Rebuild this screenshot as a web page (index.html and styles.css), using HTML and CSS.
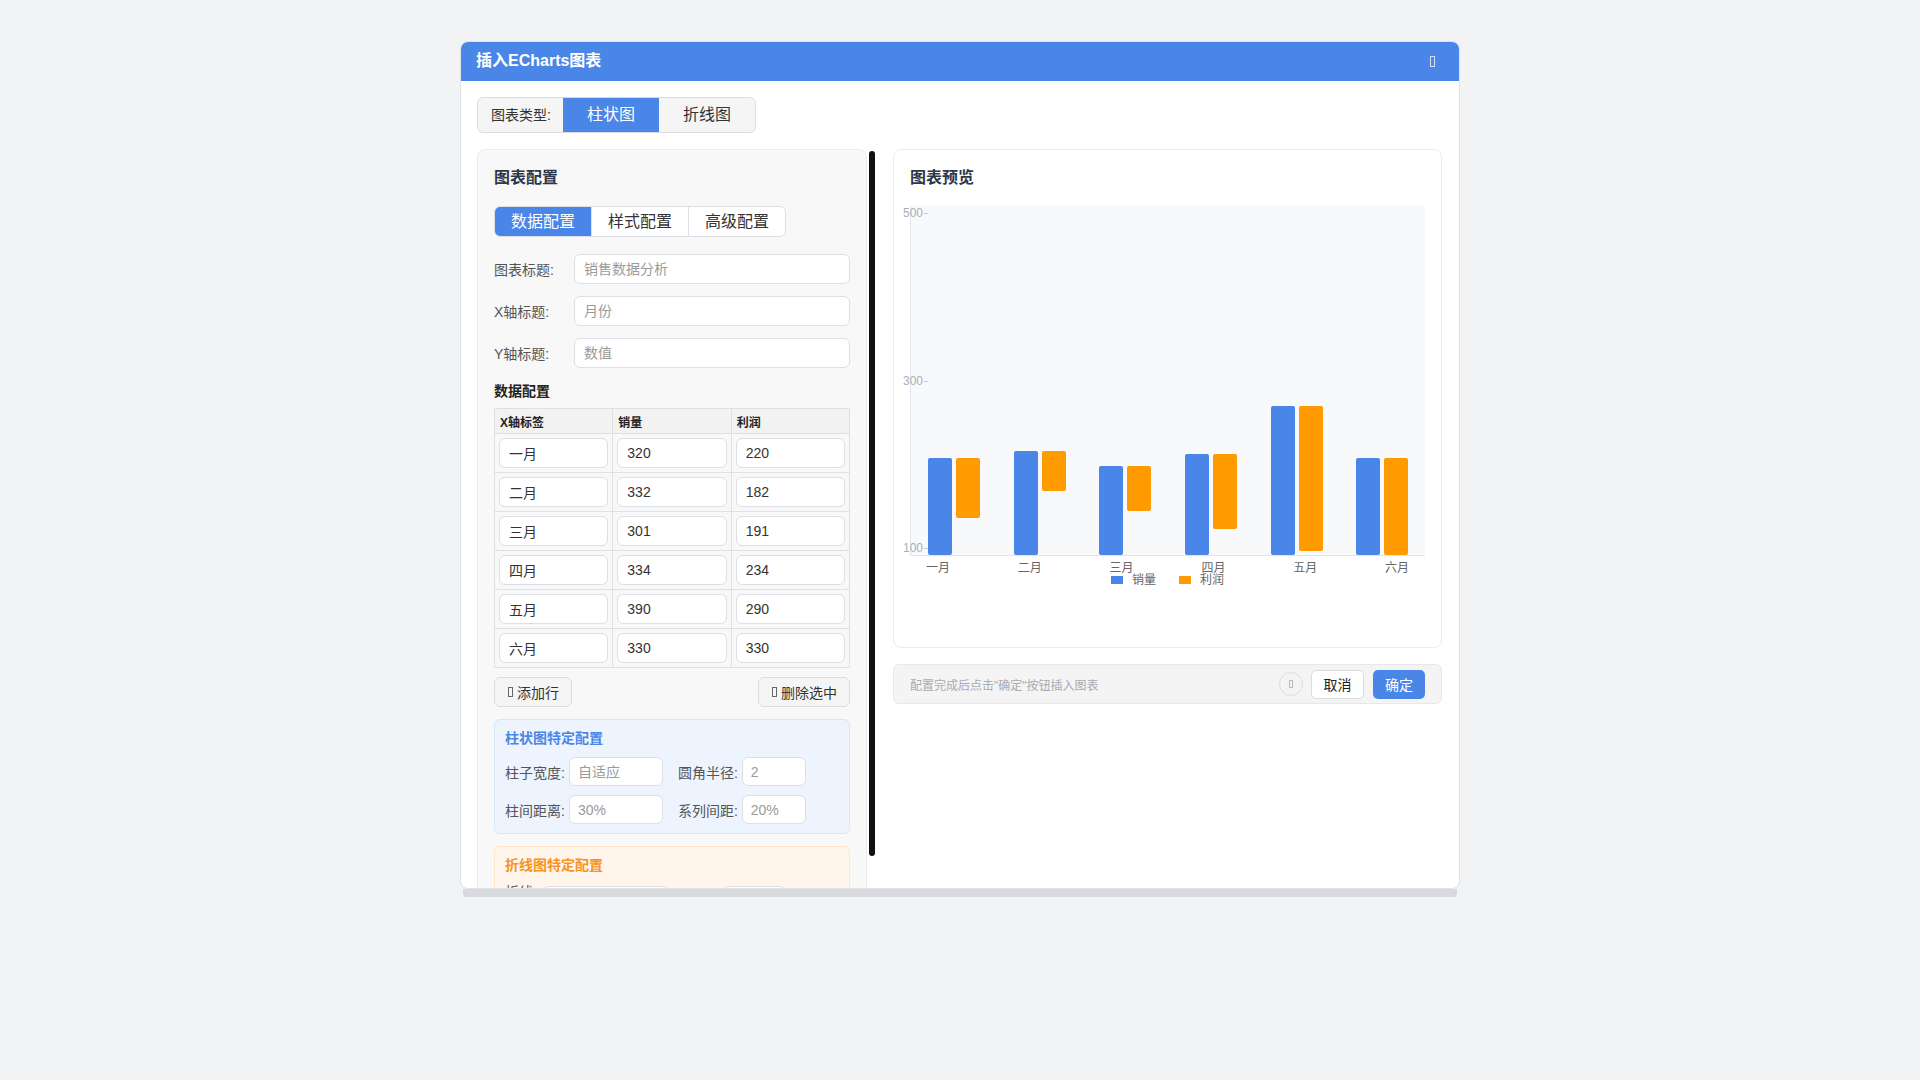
FILE: index.html
```html
<!DOCTYPE html>
<html lang="zh-CN">
<head>
<meta charset="utf-8">
<title>插入ECharts图表</title>
<link rel="stylesheet" href="styles.css">
</head>
<body>
<div class="dialog-wrap">
  <div class="dialog">
    <div class="dlg-header">
      <span class="dlg-title">插入ECharts图表</span>
      <span class="tofu tofu-light"></span>
    </div>
    <div class="dlg-body">
      <div class="type-group">
        <span class="type-label">图表类型:</span>
        <span class="type-btn active">柱状图</span>
        <span class="type-btn">折线图</span>
      </div>
      <div class="main">
        <div class="left-col">
          <div class="config-panel">
            <div class="panel-title">图表配置</div>
            <div class="tabs">
              <span class="tab active">数据配置</span>
              <span class="tab">样式配置</span>
              <span class="tab">高级配置</span>
            </div>
            <div class="form-row"><label class="form-label">图表标题:</label><input class="text-input" placeholder="销售数据分析"></div>
            <div class="form-row"><label class="form-label">X轴标题:</label><input class="text-input" placeholder="月份"></div>
            <div class="form-row"><label class="form-label">Y轴标题:</label><input class="text-input" placeholder="数值"></div>
            <div class="sub-title">数据配置</div>
            <table class="data-table">
              <thead><tr><th>X轴标签</th><th>销量</th><th>利润</th></tr></thead>
              <tbody>
                <tr><td><input class="cell-input" value="一月"></td><td><input class="cell-input" value="320"></td><td><input class="cell-input" value="220"></td></tr>
                <tr><td><input class="cell-input" value="二月"></td><td><input class="cell-input" value="332"></td><td><input class="cell-input" value="182"></td></tr>
                <tr><td><input class="cell-input" value="三月"></td><td><input class="cell-input" value="301"></td><td><input class="cell-input" value="191"></td></tr>
                <tr><td><input class="cell-input" value="四月"></td><td><input class="cell-input" value="334"></td><td><input class="cell-input" value="234"></td></tr>
                <tr><td><input class="cell-input" value="五月"></td><td><input class="cell-input" value="390"></td><td><input class="cell-input" value="290"></td></tr>
                <tr><td><input class="cell-input" value="六月"></td><td><input class="cell-input" value="330"></td><td><input class="cell-input" value="330"></td></tr>
              </tbody>
            </table>
            <div class="table-actions">
              <span class="small-btn"><span class="tofu"></span>添加行</span>
              <span class="small-btn"><span class="tofu"></span>删除选中</span>
            </div>
            <div class="spec-box bar-box">
              <div class="spec-title">柱状图特定配置</div>
              <div class="spec-row">
                <span class="field"><label class="spec-label">柱子宽度:</label><input class="spec-input wide" placeholder="自适应"></span>
                <span class="field"><label class="spec-label">圆角半径:</label><input class="spec-input narrow" placeholder="2"></span>
              </div>
              <div class="spec-row">
                <span class="field"><label class="spec-label">柱间距离:</label><input class="spec-input wide" placeholder="30%"></span>
                <span class="field"><label class="spec-label">系列间距:</label><input class="spec-input narrow" placeholder="20%"></span>
              </div>
            </div>
            <div class="spec-box line-box">
              <div class="spec-title">折线图特定配置</div>
              <div class="spec-row">
                <span class="field"><label class="spec-label short">折线类型:</label><input class="spec-input line-wide" placeholder=""></span>
                <span class="field"><label class="spec-label short">线宽:</label><input class="spec-input narrow" placeholder=""></span>
              </div>
            </div>
          </div>
          <div class="scroll-track"><div class="scroll-thumb"></div></div>
        </div>
        <div class="right-col">
          <div class="preview-card">
            <div class="panel-title">图表预览</div>
            <div class="chart">
              <div class="plot">
                <div class="y-labels"><span>500</span><span>300</span><span>100</span></div>
                <div class="slot"><div class="pair" style="height:97px"><i class="bar blue"></i><i class="bar orange" style="height:60px"></i></div></div>
                <div class="slot"><div class="pair" style="height:104px"><i class="bar blue"></i><i class="bar orange" style="height:40px"></i></div></div>
                <div class="slot"><div class="pair" style="height:89px"><i class="bar blue"></i><i class="bar orange" style="height:45px"></i></div></div>
                <div class="slot"><div class="pair" style="height:101px"><i class="bar blue"></i><i class="bar orange" style="height:75px"></i></div></div>
                <div class="slot"><div class="pair" style="height:149px"><i class="bar blue"></i><i class="bar orange" style="height:145px"></i></div></div>
                <div class="slot"><div class="pair" style="height:97px"><i class="bar blue"></i><i class="bar orange" style="height:97px"></i></div></div>
              </div>
              <div class="x-labels"><span>一月</span><span>二月</span><span>三月</span><span>四月</span><span>五月</span><span>六月</span></div>
              <div class="legend">
                <span class="legend-item"><i class="swatch blue"></i>销量</span>
                <span class="legend-item"><i class="swatch orange"></i>利润</span>
              </div>
            </div>
          </div>
          <div class="footer-bar">
            <span class="footer-tip">配置完成后点击"确定"按钮插入图表</span>
            <span class="circle-btn"><span class="tofu tofu-gray"></span></span>
            <span class="btn btn-cancel">取消</span>
            <span class="btn btn-ok">确定</span>
          </div>
        </div>
      </div>
    </div>
  </div>
  <div class="dialog-hscroll"></div>
</div>
</body>
</html>
```
FILE: styles.css
```css
* { box-sizing: border-box; }
html, body { margin: 0; padding: 0; }
body {
  background: #f2f3f5;
  font-family: "Liberation Sans", "Noto Sans CJK SC", sans-serif;
  color: #333;
  width: 1920px;
  height: 1080px;
  overflow: hidden;
}
.dialog-wrap { width: 1000px; margin: 41px auto 0; }
.dialog {
  width: 1000px;
  height: 848px;
  background: #fff;
  border: 1px solid #e2e3e6;
  border-radius: 8px;
  overflow: hidden;
}
.dialog-hscroll {
  width: 994px;
  height: 8px;
  margin: 0 auto;
  background: #d9dadd;
  border-radius: 0 0 3px 3px;
}
.dlg-header {
  height: 40px;
  margin: -1px -1px 0;
  background: #4a86e8;
  display: flex;
  align-items: center;
  justify-content: space-between;
  padding: 0 25px 0 16px;
}
.dlg-title { color: #fff; font-size: 16px; font-weight: 700; line-height: 20px; }
.tofu {
  display: inline-block;
  width: 5px;
  height: 10px;
  border: 1px solid #666;
  margin-right: 4px;
  vertical-align: -1px;
}
.tofu-light { border-color: rgba(255,255,255,0.75); height: 11px; margin-right: 0; }
.tofu-gray { border-color: #bbb; width: 4px; height: 8px; margin: 0; }
.dlg-body { padding: 16px 16px 0; }
.type-group {
  display: inline-flex;
  height: 36px;
  border: 1px solid #dcdcdc;
  border-radius: 6px;
  background: #f5f5f5;
  overflow: hidden;
}
.type-label {
  width: 85px;
  font-size: 14px;
  line-height: 34px;
  padding-left: 13px;
  color: #333;
}
.type-btn {
  width: 96px;
  text-align: center;
  font-size: 16px;
  line-height: 34px;
  color: #333;
}
.type-btn.active { background: #4a86e8; color: #fff; }
.main { display: flex; gap: 16px; margin-top: 16px; align-items: flex-start; }
.left-col { width: 400px; display: flex; align-items: flex-start; flex-shrink: 0; }
.config-panel {
  width: 390px;
  background: #f8f8f8;
  border: 1px solid #ebebeb;
  border-radius: 8px;
  padding: 16px 16px 40px;
}
.scroll-track { width: 10px; padding: 2px 2px 0 2px; }
.scroll-thumb { width: 6px; height: 705px; background: #111; border-radius: 3px; }
.panel-title { font-size: 16px; font-weight: 700; line-height: 24px; color: #2d3748; }
.tabs {
  display: inline-flex;
  margin-top: 16px;
  border: 1px solid #dcdfe6;
  border-radius: 6px;
  overflow: hidden;
  background: #fff;
}
.tab {
  width: 97px;
  text-align: center;
  font-size: 16px;
  line-height: 29px;
  color: #333;
  border-left: 1px solid #dcdfe6;
}
.tab:first-child { border-left: 0; width: 96px; }
.tab.active { background: #4a86e8; color: #fff; }
.form-row { display: flex; align-items: center; margin-top: 12px; }
.tabs + .form-row { margin-top: 17px; }
.form-label { width: 80px; font-size: 14px; color: #555; flex-shrink: 0; }
.text-input, .cell-input, .spec-input {
  font-family: inherit;
  border: 1px solid #dcdfe6;
  border-radius: 6px;
  background: #fff;
  outline: none;
}
.text-input {
  flex: 1;
  height: 30px;
  font-size: 14px;
  padding: 0 9px;
  color: #333;
}
::placeholder { color: #9a9a9a; }
.sub-title { font-size: 14px; font-weight: 700; line-height: 18px; margin-top: 14px; color: #222; }
.data-table {
  width: 356px;
  margin-top: 8px;
  border-collapse: collapse;
  table-layout: fixed;
}
.data-table th {
  height: 25px;
  background: #f2f2f2;
  border: 1px solid #e0e0e0;
  font-size: 12px;
  font-weight: 700;
  text-align: left;
  padding: 0 5px;
  color: #222;
}
.data-table td { border: 1px solid #e0e0e0; padding: 4px; height: 39px; background: #f8f8f8; }
.cell-input {
  display: block;
  width: 100%;
  height: 30px;
  font-size: 14px;
  padding: 0 9px;
  color: #333;
}
.table-actions { display: flex; justify-content: space-between; margin-top: 9px; }
.small-btn {
  height: 30px;
  display: inline-flex;
  align-items: center;
  padding: 0 12px 0 13px;
  border: 1px solid #dcdcdc;
  border-radius: 6px;
  background: #f5f5f5;
  font-size: 14px;
  color: #333;
}
.spec-box {
  margin-top: 12px;
  border-radius: 6px;
  padding: 9px 10px 9px;
}
.bar-box { background: #edf4fe; border: 1px solid #d6e6fb; }
.line-box { background: #fff5eb; border: 1px solid #fde4c6; }
.spec-title { font-size: 14px; font-weight: 700; line-height: 18px; }
.bar-box .spec-title { color: #4a86e8; }
.line-box .spec-title { color: #f7941d; }
.spec-row { display: flex; align-items: center; margin-top: 10px; }
.spec-row + .spec-row { margin-top: 9px; }
.field { display: inline-flex; align-items: center; gap: 4px; }
.field + .field { margin-left: 15px; }
.spec-label { font-size: 14px; color: #555; }
.spec-label.short { width: 34px; line-height: 16px; }
.spec-input { height: 29px; font-size: 14px; padding: 0 8px; color: #666; }
.spec-input.wide { width: 94px; }
.spec-input.narrow { width: 64px; }
.spec-input.line-wide { width: 126px; }
.right-col { width: 549px; }
.preview-card {
  height: 499px;
  background: #fff;
  border: 1px solid #ebebeb;
  border-radius: 8px;
  padding: 16px;
}
.chart { margin-top: 16px; }
.plot {
  position: relative;
  height: 350px;
  display: flex;
  background: #f8f9fb;
  border-left: 1px solid #e1e4ea;
  border-bottom: 1px solid #e1e4ea;
}
.y-labels {
  position: absolute;
  left: -8px;
  top: 0;
  bottom: 0;
  display: flex;
  flex-direction: column;
  justify-content: space-between;
  font-size: 12px;
  line-height: 14px;
  color: #a9aeb7;
}
.y-labels span::after {
  content: "";
  display: inline-block;
  width: 4px;
  height: 1px;
  background: #c8ccd3;
  vertical-align: middle;
  margin-left: 1px;
}
.slot { flex: 1; display: flex; align-items: flex-end; justify-content: center; }
.pair { display: flex; gap: 4px; align-items: flex-start; }
.bar { display: block; width: 24px; border-radius: 2px; }
.bar.blue { height: 100%; }
.blue { background: #4a86e8; }
.orange { background: #ff9a00; }
.x-labels {
  display: flex;
  justify-content: space-between;
  padding: 0 16px;
  margin-top: 6px;
  font-size: 12px;
  line-height: 12px;
  color: #666;
}
.legend {
  display: flex;
  justify-content: center;
  gap: 23px;
  font-size: 12px;
  line-height: 12px;
  color: #666;
}
.legend-item { display: inline-flex; align-items: center; }
.swatch { display: inline-block; width: 12px; height: 8px; margin-right: 9px; }
.footer-bar {
  margin-top: 16px;
  height: 40px;
  display: flex;
  align-items: center;
  gap: 8px;
  padding: 0 16px;
  background: #f4f4f5;
  border: 1px solid #e8e8e8;
  border-radius: 6px;
}
.footer-tip { flex: 1; font-size: 12px; color: #a8abb2; }
.circle-btn {
  width: 24px;
  height: 24px;
  border: 1px solid #dcdcdc;
  border-radius: 50%;
  display: inline-flex;
  align-items: center;
  justify-content: center;
}
.btn {
  height: 29px;
  display: inline-flex;
  align-items: center;
  justify-content: center;
  font-size: 14px;
  border-radius: 5px;
}
.btn-cancel { width: 53px; background: #fff; border: 1px solid #dcdcdc; color: #222; }
.btn-ok { width: 52px; background: #4a86e8; color: #fff; margin-left: 1px; }
```
